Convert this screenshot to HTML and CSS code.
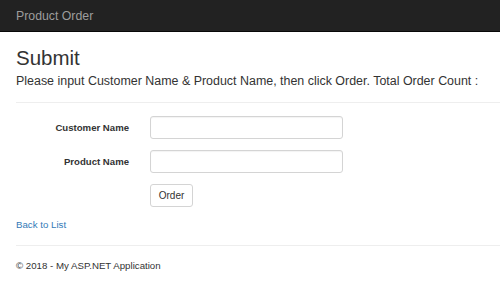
FILE: index.html
```html
<!DOCTYPE html>
<html>

<head>
  <meta name="viewport" content="width=device-width, initial-scale=1.0">
  <title>Submit - My ASP.NET Application</title>
  <link rel="stylesheet" href="styles.css">
</head>

<body>
  <nav class="navbar">
    <a class="navbar-brand" href="#">Product Order</a>
  </nav>
  <div class="body-content">
    <h2>Submit</h2>
    <h4>Please input Customer Name &amp; Product Name, then click Order. Total Order Count :</h4>
    <hr>
    <form class="form-horizontal">
      <div class="form-group">
        <label class="control-label" for="CustomerName">Customer Name</label>
        <input class="form-control" type="text" id="CustomerName">
      </div>
      <div class="form-group">
        <label class="control-label" for="ProductName">Product Name</label>
        <input class="form-control" type="text" id="ProductName">
      </div>
      <div class="form-group">
        <span></span>
        <button class="btn" type="button">Order</button>
      </div>
    </form>
    <div class="back-link">
      <a href="#">Back to List</a>
    </div>
    <hr class="footer-rule">
    <footer>
      <p>&copy; 2018 - My ASP.NET Application</p>
    </footer>
  </div>
</body>

</html>
```

FILE: styles.css
```css
html,
body {
  margin: 0;
  padding: 0;
  background-color: #fff;
  font-family: "Liberation Sans", Arial, sans-serif;
  font-size: 9.7px;
  color: #333;
  overflow: hidden;
}

.navbar {
  height: 31px;
  background-color: #222;
  border-bottom: 1px solid #080808;
  display: flex;
  align-items: center;
  padding-left: 16px;
}

.navbar-brand {
  color: #9d9d9d;
  font-size: 12.3px;
  text-decoration: none;
}

.body-content {
  padding-left: 16px;
}

h2 {
  font-size: 20.5px;
  font-weight: normal;
  line-height: 23px;
  margin: 14px 0 0;
}

h4 {
  font-size: 12.45px;
  font-weight: normal;
  line-height: 14px;
  margin: 5px 0 0;
  white-space: nowrap;
}

hr {
  border: 0;
  border-top: 1px solid #eee;
  margin: 14px 0 0;
}

.form-horizontal {
  display: flex;
  flex-direction: column;
  gap: 11px;
  margin-top: 13px;
}

.form-group {
  display: grid;
  grid-template-columns: 113px 193px;
  column-gap: 21px;
  align-items: center;
}

.control-label {
  text-align: right;
  font-weight: bold;
  font-size: 9.6px;
}

.form-control {
  box-sizing: border-box;
  height: 23px;
  margin: 0;
  border: 1px solid #d4d4d4;
  border-radius: 3px;
  box-shadow: inset 0 1px 1px rgba(0, 0, 0, .05);
  padding: 4px 8px;
  font-family: inherit;
  font-size: 9.7px;
}

.btn {
  justify-self: start;
  box-sizing: border-box;
  width: 43px;
  height: 23px;
  background-color: #fff;
  border: 1px solid #d4d4d4;
  border-radius: 3px;
  color: #333;
  font-family: inherit;
  font-size: 10px;
  padding: 0;
  cursor: pointer;
}

.back-link {
  margin-top: 11px;
  line-height: 13px;
}

.back-link a {
  color: #337ab7;
  text-decoration: none;
}

.footer-rule {
  margin-top: 14px;
}

footer p {
  margin: 13px 0 0;
  line-height: 14px;
}
```
